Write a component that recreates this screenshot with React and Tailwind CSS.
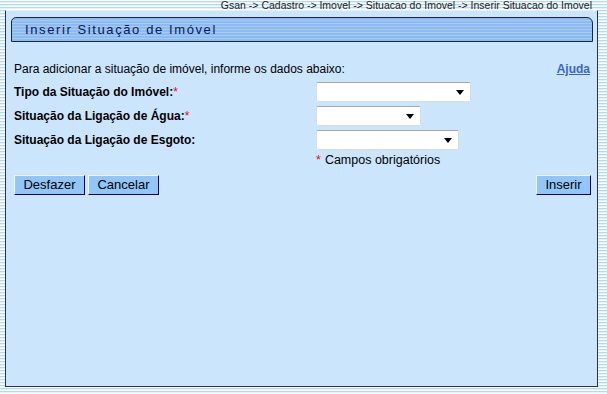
import React from "react";

const Select = ({ width }) => (
  <div
    className={`${width} h-[20px] bg-white border border-[#d4dce4] border-t-[#a4a8ac] rounded-[2px] flex items-center justify-end pr-[6px]`}
  >
    <span className="w-0 h-0 border-l-[4px] border-r-[4px] border-t-[5px] border-l-transparent border-r-transparent border-t-black" />
  </div>
);

const Button = ({ children, width }) => (
  <button
    className={`${width} h-[20px] bg-[#90c6f8] border border-t-[#eef6ff] border-l-[#eef6ff] border-b-[#000060] border-r-[#000060] text-[13px] leading-[18px] text-black`}
  >
    {children}
  </button>
);

const App = () => {
  const rows = [
    { label: "Tipo da Situação do Imóvel:", required: true, width: "w-[155px]" },
    { label: "Situação da Ligação de Água:", required: true, width: "w-[105px]" },
    { label: "Situação da Ligação de Esgoto:", required: false, width: "w-[143px]" },
  ];

  return (
    <div className="w-[607px] h-[394px] overflow-hidden font-['Liberation_Sans',Arial,sans-serif] bg-[repeating-linear-gradient(to_bottom,#ffffff_0px,#ffffff_1px,#b2daf4_1px,#b2daf4_2px,#e4f2fc_2px,#e4f2fc_3px)]">
      {/* breadcrumb */}
      <div className="h-[10px] leading-[10px] text-[10.5px] text-[#222] text-right pr-[15px] whitespace-nowrap">
        Gsan -&gt; Cadastro -&gt; Imovel -&gt; Situacao do Imovel -&gt; Inserir Situacao do Imovel
      </div>

      {/* main panel */}
      <div className="ml-[5px] w-[593px] h-[377px] bg-[#cbe5fd] border border-t-[#e2f0fc] border-l-[#26344f] border-r-[#26344f] border-b-[#26344f] pt-[6px] px-[5px]">
        <div className="w-[582px] h-[25px] rounded-tl-[5px] rounded-tr-[6px] border border-[#18264a] bg-[repeating-linear-gradient(to_bottom,#8dbbee_0px,#8dbbee_2px,#a3cbf3_2px,#a3cbf3_3px)] flex items-center pl-[13px]">
          <span className="text-[13px] tracking-[1.6px] text-[#0a1660]">
            Inserir Situação de Imóvel
          </span>
        </div>

        <div className="pl-[3px] pr-[1px]">
          <div className="mt-[19px] h-[16px] flex items-center justify-between text-[12px] text-black">
            <span>Para adicionar a situação de imóvel, informe os dados abaixo:</span>
            <a href="#" className="font-bold underline text-[#3a64cc] mr-[1px]">
              Ajuda
            </a>
          </div>

          <div className="mt-[3px] flex flex-col">
            {rows.map((row) => (
              <div key={row.label} className="h-[24px] flex items-center">
                <span className="w-[302px] text-[12px] font-bold text-black">
                  {row.label}
                  {row.required && <span className="text-[#ff0000] font-normal">*</span>}
                </span>
                <Select width={row.width} />
              </div>
            ))}
          </div>

          <div className="h-[16px] flex items-center pl-[302px] text-[12.5px] text-black">
            <span className="text-[#ff0000] mr-[4px]">*</span>
            Campos obrigatórios
          </div>

          <div className="mt-[7px] flex items-center justify-between">
            <div className="flex gap-[3px]">
              <Button width="w-[71px]">Desfazer</Button>
              <Button width="w-[71px]">Cancelar</Button>
            </div>
            <Button width="w-[55px]">Inserir</Button>
          </div>
        </div>
      </div>
    </div>
  );
};

export default App;
